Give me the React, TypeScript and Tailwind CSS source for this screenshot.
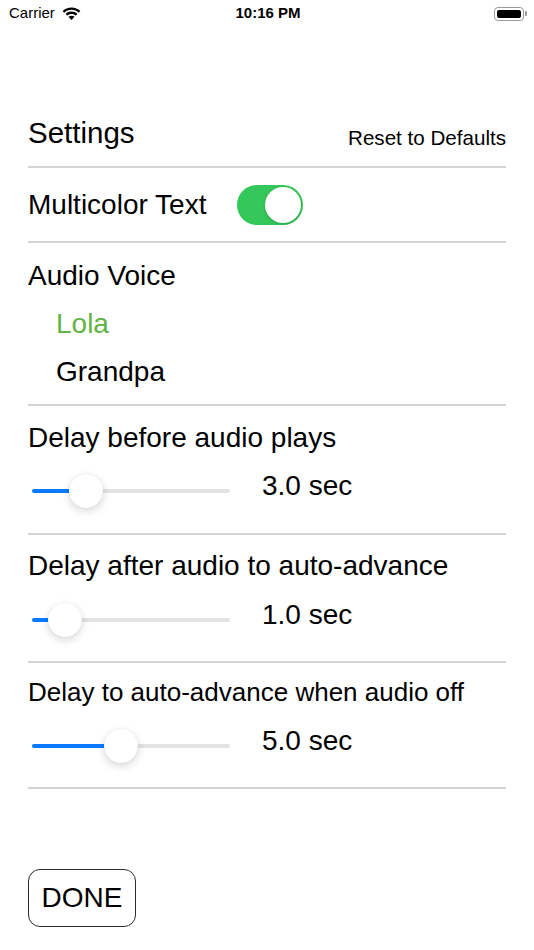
import React from 'react';

const Divider = () => <div className="h-[2px] bg-[#d4d4d6]" />;

const WifiIcon = () => (
  <svg width="19" height="14" viewBox="0 0 19 14" className="ml-[7px]">
    <path d="M9.5 0.5C6 0.5 3 1.8 0.6 4L2.2 5.7C4.2 3.9 6.7 2.8 9.5 2.8S14.8 3.9 16.8 5.7L18.4 4C16 1.8 13 0.5 9.5 0.5Z" fill="#000" />
    <path d="M9.5 4.6C7.2 4.6 5.2 5.4 3.6 6.9L5.2 8.6C6.4 7.5 7.9 6.9 9.5 6.9S12.6 7.5 13.8 8.6L15.4 6.9C13.8 5.4 11.8 4.6 9.5 4.6Z" fill="#000" />
    <path d="M9.5 8.7C8.3 8.7 7.3 9.1 6.5 9.8L9.5 13L12.5 9.8C11.7 9.1 10.7 8.7 9.5 8.7Z" fill="#000" />
  </svg>
);

const Battery = () => (
  <div className="flex items-center">
    <div className="w-[30px] h-[14px] rounded-[4px] border border-[#9a9a9a] p-[2px]">
      <div className="w-full h-full rounded-[2px] bg-black" />
    </div>
    <div className="w-[2px] h-[5px] rounded-r-[1px] bg-[#9a9a9a] ml-[1px]" />
  </div>
);

interface SliderProps {
  label: string;
  thumb: number;
}

const SliderRow: React.FC<SliderProps> = ({ label, thumb }) => (
  <div className="flex items-center h-[40px]">
    <div className="relative w-[198px] h-[40px] ml-[4px]">
      <div className="absolute left-0 right-0 top-[18px] h-[4px] rounded-full bg-[#e3e3e6]" />
      <div
        className="absolute left-0 top-[18px] h-[4px] rounded-full bg-[#0a7aff]"
        style={{ width: thumb }}
      />
      <div
        className="absolute top-[3px] w-[34px] h-[34px] rounded-full bg-white shadow-[0_3px_8px_rgba(0,0,0,0.16),0_0_1px_rgba(0,0,0,0.12)]"
        style={{ left: thumb - 17 }}
      />
    </div>
    <span className="ml-[32px] mb-[10px] text-[28px] leading-[34px]">{label}</span>
  </div>
);

export default function App() {
  return (
    <div
      className="w-[534px] h-[950px] bg-white text-black"
      style={{ fontFamily: '"Liberation Sans", Arial, sans-serif' }}
    >
      {/* status bar */}
      <div className="h-[27px] flex items-center justify-between pl-[9px] pr-[7px] text-[15px]">
        <div className="flex items-center w-[120px]">
          <span>Carrier</span>
          <WifiIcon />
        </div>
        <span className="font-semibold">10:16 PM</span>
        <div className="w-[120px] flex justify-end">
          <Battery />
        </div>
      </div>

      <div className="mx-[28px]">
        <div className="mt-[89px] h-[50px] flex items-start justify-between">
          <span className="text-[29.5px] leading-[34px]">Settings</span>
          <span className="mt-[10px] text-[20.6px] leading-[24px]">Reset to Defaults</span>
        </div>
        <Divider />

        <div className="h-[73px] flex items-center">
          <span className="text-[28px] leading-[34px]">Multicolor Text</span>
          <div className="ml-[31px] w-[66px] h-[40px] rounded-full bg-[#34c759] p-[2px] flex justify-end">
            <div className="w-[36px] h-[36px] rounded-full bg-white shadow-[0_1px_3px_rgba(0,0,0,0.2)]" />
          </div>
        </div>
        <Divider />

        <div className="pt-[9px] pb-[8px] text-[28px] leading-[48px]">
          <div>Audio Voice</div>
          <div className="pl-[28px] text-[#5fb443]">Lola</div>
          <div className="pl-[28px]">Grandpa</div>
        </div>
        <Divider />

        <div className="pt-[15px] pb-[22px]">
          <div className="text-[28px] leading-[34px]">Delay before audio plays</div>
          <div className="mt-[16px]">
            <SliderRow thumb={54} label="3.0 sec" />
          </div>
        </div>
        <Divider />

        <div className="pt-[14px] pb-[21px]">
          <div className="text-[28px] leading-[34px]">Delay after audio to auto-advance</div>
          <div className="mt-[17px]">
            <SliderRow thumb={33} label="1.0 sec" />
          </div>
        </div>
        <Divider />

        <div className="pt-[12px] pb-[21px]">
          <div className="text-[26px] leading-[34px]">Delay to auto-advance when audio off</div>
          <div className="mt-[17px]">
            <SliderRow thumb={89} label="5.0 sec" />
          </div>
        </div>
        <Divider />

        <button className="mt-[80px] w-[108px] h-[58px] rounded-[12px] border-[1.5px] border-[#2b2b2b] text-[28px] leading-[34px] flex items-center justify-center">
          DONE
        </button>
      </div>
    </div>
  );
}
